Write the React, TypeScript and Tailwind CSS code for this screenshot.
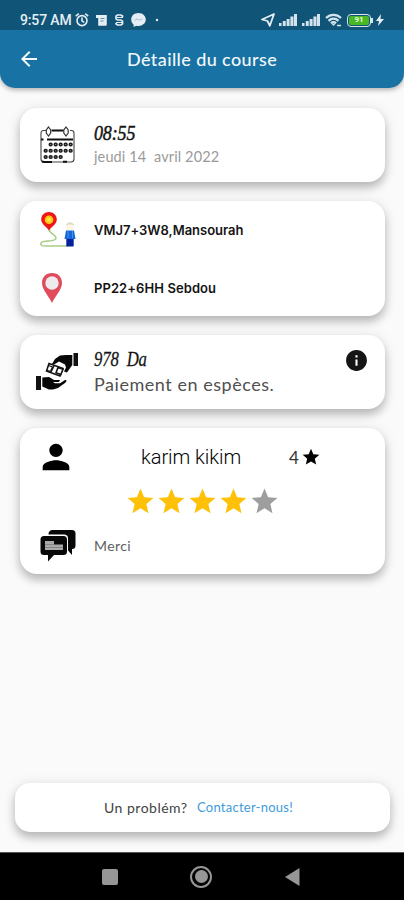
import type { ReactNode } from "react";
import { MdArrowBack, MdInfo, MdPerson, MdStar } from "react-icons/md";

const Card = ({ className, children }: { className: string; children: ReactNode }) => (
  <section
    className={`mr-[19px] ml-5 rounded-[17px] bg-white shadow-[0_6px_8px_rgba(0,0,0,0.2),0_2px_14px_rgba(0,0,0,0.12)] ${className}`}
  >
    {children}
  </section>
);

const Signal = () => (
  <svg className="h-[14px] w-[18px]" viewBox="0 0 18 14" fill="#d4e4ef">
    <rect x="0" y="10" width="2.5" height="3" />
    <rect x="3.8" y="8" width="2.9" height="5" />
    <rect x="7.6" y="6" width="3" height="7" />
    <rect x="11.4" y="3.5" width="3.1" height="9.5" />
    <rect x="15" y="1" width="3" height="12" />
  </svg>
);

const StatusBar = () => (
  <div className="flex h-[30px] items-center bg-[#105477] pt-[10px] pl-5 text-[#e4eef4]">
    <span className="w-[55px] whitespace-nowrap font-['Roboto',sans-serif] text-[14px] leading-none font-medium tracking-[-0.15px]">
      9:57 AM
    </span>
    {/* Notification icons */}
    <svg className="h-4 w-[84px]" viewBox="0 0 84 16" fill="none" stroke="currentColor">
      <circle cx="7" cy="8.6" r="5" strokeWidth="1.6" />
      <path d="M7 5.5v3.4l2.2 1.4M.8 4.2 3.8 1.6M13.2 4.2l-3-2.6" strokeWidth="1.6" />
      <path d="M21 3h10.8v9.5a1.3 1.3 0 0 1-1.3 1.3h-7.3V6H21z" fill="currentColor" stroke="none" />
      <path d="M25.5 6.5h4M25.5 9h3" stroke="#5c8ca7" strokeWidth="1" />
      <path d="M47.5 5V4L46 3h-3.500L41 4.200v2.600l1.500 1.200H46l1.500 1.200v2.600L46 13h-3.500L41 11.800V11" strokeWidth="1.700" />
      <path d="M42 5.500h6M41 10.500h6" strokeWidth="1" />
      <path d="M63.5 1c-4.200 0-7.300 2.800-7.300 6.600 0 2.100.9 3.800 2.400 5v2.500l2.500-1.400c.8.200 1.600.3 2.400.3 4.200 0 7.300-2.700 7.300-6.400S67.700 1 63.500 1Z" fill="currentColor" stroke="none" />
      <path d="m59.500 8.500 2.800-1.500 2 1.200 3-1.200" stroke="#b4cad7" strokeWidth="1.200" />
      <circle cx="82" cy="8" r="1.200" fill="currentColor" stroke="none" />
    </svg>
    {/* Connectivity */}
    <div className="ml-auto flex items-center pr-5">
      <svg className="mr-[4px] size-[14px]" viewBox="0 0 14 14" fill="none" stroke="currentColor" strokeWidth="1.8" strokeLinejoin="round">
        <path d="M13 1 8.800 12.800 6.500 8 1 6.500Z" />
      </svg>
      <Signal />
      <span className="w-[5px]" />
      <Signal />
      <svg className="mx-[5px] h-[14px] w-[17px]" viewBox="0 0 17 14" fill="none" stroke="#d4e4ef" strokeWidth="2.300">
        <path d="M1 5c4.500-4.200 10.500-4.200 15 0M3.500 7.800c3-2.800 7-2.800 10 0M6 10.300c1.700-1.500 3.300-1.500 5 0" />
        <path d="m6.800 11 1.700 2 1.700-2Z" fill="#d4e4ef" stroke="none" />
        <path d="M12 12.500h4" strokeWidth="1.500" />
      </svg>
      <div className="flex h-[13px] w-[24px] items-center justify-center rounded-[4px] border-[1.5px] border-[#d8e5ec] p-px">
        <span className="flex h-full w-full items-center justify-center rounded-[2px] bg-[#49b824] font-['Roboto',sans-serif] text-[8px] leading-none font-bold text-[#e2f8db]">
          91
        </span>
      </div>
      <span className="h-[5px] w-[2px] bg-[#d8e5ec]" />
      <svg className="ml-[3px] h-[12px] w-[8px]" viewBox="0 0 8 12" fill="currentColor">
        <path d="M5 0 0 7h3l-1 5 6-7H4.500Z" />
      </svg>
    </div>
  </div>
);

const CalendarIcon = () => (
  <svg className="h-[37px] w-[35px]" viewBox="0 0 35 37" fill="none" stroke="#111">
    <path d="M6 4.500H3.500A2.500 2.500 0 0 0 1 7v26a3 3 0 0 0 3 3h27a3 3 0 0 0 3-3V7a2.500 2.500 0 0 0-2.500-2.500H30" stroke="#444" strokeWidth="1.100" />
    <path d="M11.500 4.500h12M1 13.500h2.500M7 13.500h26M2 35.500l2 .500h8M23 35.700h4" strokeWidth="1.900" />
    <path d="m8.500 1 2.200 3v3l-2.200 3-2.200-3V4ZM26 1l2.200 3v3L26 10l-2.200-3V4Z" stroke="#333" strokeWidth="1.200" />
    <g stroke="#1c1c1c" strokeWidth="4" strokeLinecap="round" strokeDasharray="0.300 4.700">
      <path d="M10.500 18.500h22" />
      <path d="M5.500 24.800h27" />
      <path d="M5.500 31h18" />
    </g>
    <g stroke="#999" strokeWidth="1" strokeDasharray="1 4">
      <path d="M10.200 18.500h22M5.200 24.800h27M5.200 31h17" />
    </g>
  </svg>
);

const RouteIcon = () => (
  <svg className="h-[36px] w-[36px]" viewBox="0 0 36 36">
    <path d="M9 17c0 5 7 5 7 9 0 5-13 1-15 5-1 3 2 3 5 3h22" fill="none" stroke="#a9cd87" strokeWidth="1.500" />
    <path d="M9 0C4.500 0 1.200 3.300 1.200 7.600 1.200 12.300 7 15.300 9 18.500c2-3.200 7.800-6.200 7.800-10.900C16.800 3.300 13.500 0 9 0Z" fill="#ef1616" />
    <circle cx="9" cy="7.700" r="4.300" fill="#ffc816" />
    <circle cx="9" cy="7.700" r="2" fill="#ffe64b" />
    <circle cx="30" cy="15" r="3.600" fill="#fff6e4" />
    <path d="M26 14c0-5 8-5 8 0-2-2-6-2-8 0Z" fill="#dddcc2" />
    <path d="M26 18.500h8l1.500 8.500H33.500v7h-7v-7H24.500Z" fill="#1766d8" />
    <path d="M26.500 27h7v7.500h-7Z" fill="#061f9b" />
    <path d="M28 19v7M32.500 19v7" stroke="#3c93f0" />
  </svg>
);

const PinIcon = () => (
  <svg className="h-[32px] w-[22px]" viewBox="0 0 22 32">
    <path d="M11 1C5 1 1 5 1 11c0 7 7 13 10 20 3-7 10-13 10-20C21 5 17 1 11 1Z" fill="#e04c5c" />
    <circle cx="11" cy="11" r="6.700" fill="#edebeb" />
  </svg>
);

const CashHandsIcon = () => (
  <svg className="h-[39px] w-[42px]" viewBox="0 0 42 39">
    <path d="M37.500 1H42v13h-4.500ZM0 24h5v14H0Z" fill="#111" />
    <path d="M36.300 3H30l-6 .500-5 3.500-3 5 2 .500 5-3 6 3 1 3-2 4 3 1 3.500-5 1.800-2.500ZM6.300 25.500 13 25l5 3h6l-1 2h-6l2 1.200h5l5-3.200c2-.500 2 1 0 3l-7 5-5 1.500h-4l-6.700-3Z" fill="#080808" />
    <g fill="#fff" stroke="#151515" strokeWidth="1.600">
      <path d="m13 11.500 14 5-3 7.500-13.500-5Z" />
      <path d="m22 15.500 5 1.800-2.200 5.200-4.800-1.700Z" />
    </g>
    <path d="m12.500 13.500 4 1.500-2 4.500-3.500-1.200M18 14l-3 6" fill="none" stroke="#151515" strokeWidth="1.300" />
  </svg>
);

const ChatIcon = () => (
  <svg className="h-[33px] w-[36px]" viewBox="0 0 36 33">
    <path d="M12 1h20a3.500 3.500 0 0 1 3.500 3.500v12A3.500 3.500 0 0 1 32 20v6l-4-4.500V9.500a4 4 0 0 0-4-4H8.500A4 4 0 0 1 12 1Z" fill="#080808" />
    <path d="M4 7h19.500a3.500 3.500 0 0 1 3.500 3.500v12a3.500 3.500 0 0 1-3.500 3.500H14l-6 6.500V26H4a3.500 3.500 0 0 1-3.500-3.500v-12A3.500 3.500 0 0 1 4 7Z" fill="#080808" />
    <path d="M5 12h9v3.500h9V21H5Z" fill="#a9a9a9" />
    <path d="M5 15.500h9M5 18.500h18" stroke="#777" strokeWidth=".7" />
  </svg>
);

const NavBar = () => (
  <div className="flex h-12 items-center border-t border-[#555] bg-black pl-[102px]">
    <span className="size-4 rounded-[2px] bg-[#969696]" />
    <span className="ml-[72px] flex size-[22px] items-center justify-center rounded-full border-2 border-[#969696]">
      <span className="size-[13px] rounded-full bg-[#969696]" />
    </span>
    <svg className="ml-[73px] h-[18px] w-[15px]" viewBox="0 0 15 18" fill="#969696">
      <path d="M14.500 0v18L0 9Z" />
    </svg>
  </div>
);

export default function App() {
  return (
    <main className="flex h-[900px] w-full flex-col overflow-hidden bg-[#fafafa] font-['Lato',sans-serif] text-[#151515]">
      <header className="h-[88px] shrink-0 overflow-hidden rounded-b-[15px] bg-[#1872a3] shadow-[0_2px_5px_rgba(0,0,0,0.3)]">
        <StatusBar />
        <div className="flex h-[58px] items-center pl-[17px] text-[#f3f8fb]">
          <MdArrowBack className="size-6" />
          <h1 className="ml-[86px] text-[18px] leading-none font-medium tracking-[0.4px] whitespace-nowrap">
            Détaille du course
          </h1>
        </div>
      </header>

      {/* Date and time */}
      <Card className="mt-5 flex h-[74px] shrink-0 pl-5">
        <div className="w-[54px] pt-[18px]">
          <CalendarIcon />
        </div>
        <div className="pt-[13px]">
          <p className="origin-left scale-x-[0.82] font-['Liberation_Serif',serif] text-[22px] leading-[23px] tracking-[-0.2px] italic [-webkit-text-stroke:0.5px_#151515]">
            08:55
          </p>
          <p className="mt-[3px] text-[14.5px] leading-5 tracking-[0.12px] whitespace-pre text-[#9a9a9a]">jeudi 14  avril 2022</p>
        </div>
      </Card>

      {/* Pickup and destination */}
      <Card className="mt-[19px] h-[115px] shrink-0 pl-5">
        <div className="flex h-[58px] items-center">
          <div className="w-[54px]">
            <RouteIcon />
          </div>
          <p className="font-['Inter',sans-serif] text-[13px] leading-none font-semibold tracking-[-0.02px]">VMJ7+3W8,Mansourah</p>
        </div>
        <div className="flex h-[57px] items-center">
          <div className="w-[54px] pl-px">
            <PinIcon />
          </div>
          <p className="pt-px font-['Inter',sans-serif] text-[13px] leading-none font-semibold tracking-[0.08px]">PP22+6HH Sebdou</p>
        </div>
      </Card>

      {/* Payment */}
      <Card className="mt-[19px] flex h-[74px] shrink-0 pl-4">
        <div className="w-[58px] pt-[17px]">
          <CashHandsIcon />
        </div>
        <div className="w-[250px] pt-[12px]">
          <p className="origin-left scale-x-[0.76] font-['Liberation_Serif',serif] text-[22px] leading-[23px] tracking-[-0.2px] whitespace-pre italic [-webkit-text-stroke:0.3px_#151515]">
            978  Da
          </p>
          <p className="mt-[2px] text-[18px] leading-6 tracking-[0.54px] whitespace-nowrap text-[#505050]">Paiement en espèces.</p>
        </div>
        <MdInfo className="mt-[13px] size-[25px]" />
      </Card>

      {/* Driver and rating */}
      <Card className="mt-[19px] h-[146px] shrink-0">
        <div className="flex h-[58px] items-center pl-5">
          <MdPerson className="-ml-[4px] size-[40px] text-black" />
          <p className="ml-[65px] w-[148px] font-['Roboto',sans-serif] text-[20px] leading-none font-light tracking-[-0.05px] whitespace-nowrap text-black">
            karim kikim
          </p>
          <span className="text-[17px] leading-none text-[#333]">4</span>
          <MdStar className="ml-[2px] size-5 text-black" />
        </div>
        <div className="-mt-px flex h-[32px] items-center pl-[105px]">
          {[1, 2, 3, 4, 5].map((n) => (
            <MdStar key={n} className={n <= 4 ? "size-[31px] text-[#ffc107]" : "size-[31px] text-[#9e9e9e]"} />
          ))}
        </div>
        <div className="flex h-[56px] items-center pl-5">
          <div className="w-[54px]">
            <ChatIcon />
          </div>
          <p className="pt-[2px] text-[14px] leading-none tracking-[0.4px] text-[#606060]">Merci</p>
        </div>
      </Card>

      <footer className="mt-auto shrink-0">
        <div className="mr-[14px] mb-5 ml-[15px] flex h-[49px] items-center rounded-[15px] bg-white pl-[89px] text-[14px] shadow-[0_6px_8px_rgba(0,0,0,0.2),0_2px_14px_rgba(0,0,0,0.12)]">
          <p className="w-[93px] tracking-[0.5px] whitespace-nowrap text-[#424242]">Un problém?</p>
          <button className="text-[13px] tracking-[0.25px] whitespace-nowrap text-[#409bdc]">Contacter-nous!</button>
        </div>
        <NavBar />
      </footer>
    </main>
  );
}
